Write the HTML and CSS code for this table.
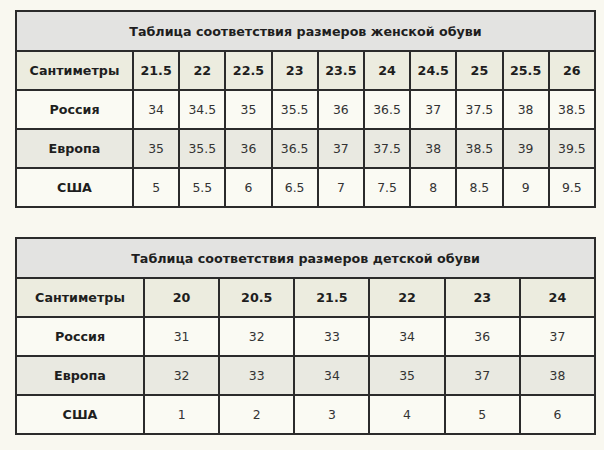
FILE: index.html
```html
<!DOCTYPE html>
<html lang="ru">
<head>
<meta charset="utf-8">
<link rel="stylesheet" href="styles.css">
</head>
<body>
<table class="sizes women">
  <colgroup><col class="first"><col span="10"></colgroup>
  <tr class="title"><td colspan="11">Таблица соответствия размеров женской обуви</td></tr>
  <tr class="head"><th>Сантиметры</th><th>21.5</th><th>22</th><th>22.5</th><th>23</th><th>23.5</th><th>24</th><th>24.5</th><th>25</th><th>25.5</th><th>26</th></tr>
  <tr><th>Россия</th><td>34</td><td>34.5</td><td>35</td><td>35.5</td><td>36</td><td>36.5</td><td>37</td><td>37.5</td><td>38</td><td>38.5</td></tr>
  <tr class="alt"><th>Европа</th><td>35</td><td>35.5</td><td>36</td><td>36.5</td><td>37</td><td>37.5</td><td>38</td><td>38.5</td><td>39</td><td>39.5</td></tr>
  <tr><th>США</th><td>5</td><td>5.5</td><td>6</td><td>6.5</td><td>7</td><td>7.5</td><td>8</td><td>8.5</td><td>9</td><td>9.5</td></tr>
</table>
<table class="sizes kids">
  <colgroup><col class="first"><col span="6"></colgroup>
  <tr class="title"><td colspan="7">Таблица соответствия размеров детской обуви</td></tr>
  <tr class="head"><th>Сантиметры</th><th>20</th><th>20.5</th><th>21.5</th><th>22</th><th>23</th><th>24</th></tr>
  <tr><th>Россия</th><td>31</td><td>32</td><td>33</td><td>34</td><td>36</td><td>37</td></tr>
  <tr class="alt"><th>Европа</th><td>32</td><td>33</td><td>34</td><td>35</td><td>37</td><td>38</td></tr>
  <tr><th>США</th><td>1</td><td>2</td><td>3</td><td>4</td><td>5</td><td>6</td></tr>
</table>
</body>
</html>
```
FILE: styles.css
```css
html, body {
  margin: 0;
  background: #f9f8f0;
}
body {
  padding: 10px 8px 0 15px;
  font-family: "DejaVu Sans", Verdana, sans-serif;
  color: #222;
}
.sizes {
  border-collapse: collapse;
  table-layout: fixed;
  width: 581px;
  border: 2px solid #2b2b2b;
}
.kids {
  margin-top: 29px;
}
.women .first { width: 117px; }
.kids .first { width: 128px; }
.sizes td, .sizes th {
  border: 2px solid #2b2b2b;
  padding: 0;
  height: 37px;
  text-align: center;
  vertical-align: middle;
  font-size: 12.4px;
  background: #fafaf3;
}
.sizes td {
  font-weight: normal;
  color: #333;
}
.sizes th {
  font-weight: bold;
  font-size: 12.7px;
  color: #1e1e1e;
}
.sizes .title td {
  height: 38px;
  background: #e3e3e1;
  font-weight: bold;
  color: #1e1e1e;
  font-size: 12.7px;
}
.sizes .head th {
  background: #ececdf;
}
.sizes .alt td, .sizes .alt th {
  background: #e9e9e1;
}
```
